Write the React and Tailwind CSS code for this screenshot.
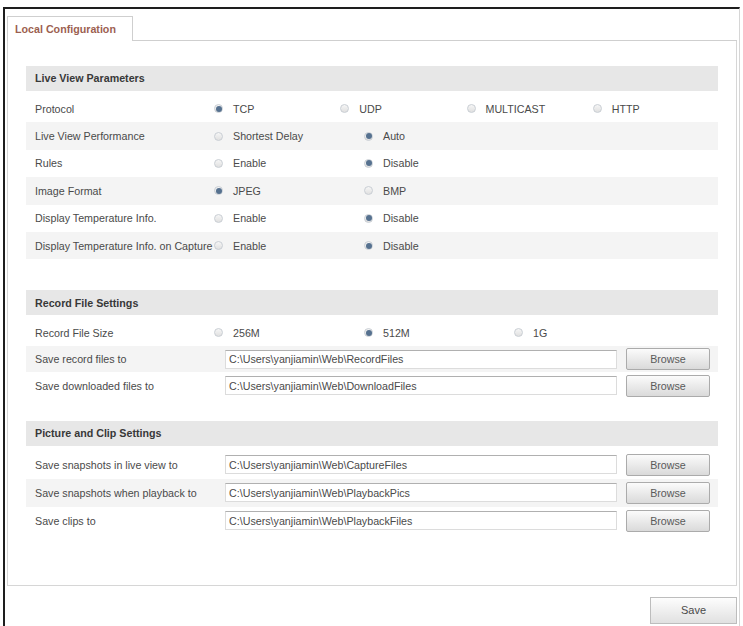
import React from "react";

const liveRows = [
  { label: "Protocol", options: ["TCP", "UDP", "MULTICAST", "HTTP"], checked: 0 },
  { label: "Live View Performance", options: ["Shortest Delay", "Auto"], checked: 1 },
  { label: "Rules", options: ["Enable", "Disable"], checked: 1 },
  { label: "Image Format", options: ["JPEG", "BMP"], checked: 0 },
  { label: "Display Temperature Info.", options: ["Enable", "Disable"], checked: 1 },
  { label: "Display Temperature Info. on Capture", options: ["Enable", "Disable"], checked: 1 },
];

const recordPaths = [
  { label: "Save record files to", path: "C:\\Users\\yanjiamin\\Web\\RecordFiles" },
  { label: "Save downloaded files to", path: "C:\\Users\\yanjiamin\\Web\\DownloadFiles" },
];

const picturePaths = [
  { label: "Save snapshots in live view to", path: "C:\\Users\\yanjiamin\\Web\\CaptureFiles" },
  { label: "Save snapshots when playback to", path: "C:\\Users\\yanjiamin\\Web\\PlaybackPics" },
  { label: "Save clips to", path: "C:\\Users\\yanjiamin\\Web\\PlaybackFiles" },
];

function Radio({ on }) {
  return (
    <span className="w-[9px] h-[9px] rounded-full border border-[#c9ced4] bg-gradient-to-b from-[#f6f6f6] to-[#e0e0e0] flex items-center justify-center shrink-0">
      {on && <span className="w-[6px] h-[6px] rounded-full bg-[#56718f]" />}
    </span>
  );
}

function SectionHeader({ title }) {
  return (
    <div className="h-[25px] bg-[#e7e7e7] flex items-center pl-[9px] font-bold text-[#383838]">
      {title}
    </div>
  );
}

function RadioRow({ label, options, checked, shaded, height }) {
  return (
    <div className={`flex items-center pl-[9px] ${height} ${shaded ? "bg-[#f4f4f4]" : ""}`}>
      <div className="w-[178px] shrink-0 whitespace-nowrap">{label}</div>
      {options.map((opt, i) => (
        <div key={opt} className="w-[150px] flex items-center gap-[10px] pl-[1px]">
          <Radio on={i === checked} />
          <span>{opt}</span>
        </div>
      ))}
    </div>
  );
}

function PathRow({ label, path, shaded, height }) {
  return (
    <div className={`flex items-center pl-[9px] ${height} ${shaded ? "bg-[#f4f4f4]" : ""}`}>
      <div className="w-[190px] shrink-0 whitespace-nowrap">{label}</div>
      <div className="w-[392px] h-[19px] bg-white border border-[#dcdcdc] border-t-[#b0b0b0] flex items-center pl-[3px] text-[#4a4a4a] whitespace-nowrap">
        {path}
      </div>
      <button className="ml-[9px] w-[84px] h-[22px] rounded-[2px] border border-[#ababab] bg-gradient-to-b from-[#fbfbfb] to-[#dadada] text-[#5a5a5a]">
        Browse
      </button>
    </div>
  );
}

export default function App() {
  return (
    <div className="w-[743px] h-[626px] bg-white overflow-hidden pt-[7px] pl-[3px] text-[10.7px] text-[#4a4a4a] font-['Liberation_Sans',Arial,sans-serif]">
      <div className="w-[737px] h-[700px] border-l-2 border-t-2 border-[#1e1e1e] border-r border-r-[#d6d6d6] pt-[7px] pl-[2px] pr-[2px]">
        {/* tab strip */}
        <div className="flex h-[25px]">
          <div className="w-[126px] border border-b-0 border-[#cfcfcf] bg-white flex items-center pl-[7px] font-bold text-[#9c5f50]">
            Local Configuration
          </div>
          <div className="flex-1 border-b border-[#cfcfcf]" />
        </div>

        {/* panel */}
        <div className="h-[545px] border-l border-r border-b border-[#d6d6d6] pt-[25px] pl-[18px] pr-[18px]">
          <SectionHeader title="Live View Parameters" />
          <div className="mt-[4px]">
            {liveRows.map((r, i) => (
              <RadioRow key={r.label} {...r} shaded={i % 2 === 1} height="h-[27.4px]" />
            ))}
          </div>

          <div className="mt-[31px]">
            <SectionHeader title="Record File Settings" />
            <div className="mt-[4px]">
              <RadioRow label="Record File Size" options={["256M", "512M", "1G"]} checked={1} height="h-[26.5px]" />
              {recordPaths.map((r, i) => (
                <PathRow key={r.label} {...r} shaded={i === 0} height="h-[26.5px]" />
              ))}
            </div>
          </div>

          <div className="mt-[22px]">
            <SectionHeader title="Picture and Clip Settings" />
            <div className="mt-[5px]">
              {picturePaths.map((r, i) => (
                <PathRow key={r.label} {...r} shaded={i === 1} height="h-[28px]" />
              ))}
            </div>
          </div>
        </div>

        {/* footer */}
        <div className="flex justify-end pt-[11px]">
          <button className="w-[87px] h-[27px] border border-[#bdbdbd] bg-gradient-to-b from-[#fdfdfd] to-[#e1e1e1] text-[#4a4a4a] text-[11px]">
            Save
          </button>
        </div>
      </div>
    </div>
  );
}
